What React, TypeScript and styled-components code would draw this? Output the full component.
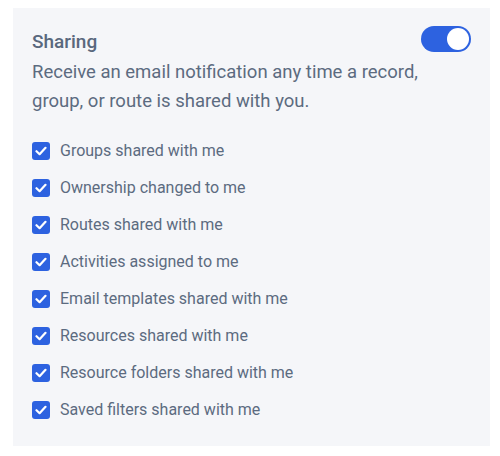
import React, { useState } from 'react'
import styled, { createGlobalStyle } from 'styled-components'

const GlobalStyle = createGlobalStyle`
  body {
    margin: 0;
    background: #ffffff;
    font-family: Roboto, "Liberation Sans", sans-serif;
  }
`

const Panel = styled.section`
  margin: 8px 10px 0 13px;
  width: 477px;
  box-sizing: border-box;
  background: #f5f6f9;
  padding: 23px 19px 27px 19px;
  color: #5c6b80;
`

const Header = styled.div`
  display: flex;
  justify-content: space-between;
  align-items: flex-start;
`

const Title = styled.h3`
  margin: 0;
  font-size: 19px;
  font-weight: 500;
  line-height: 22px;
  color: #59687d;
`

const Description = styled.p`
  margin: 5px 0 0;
  font-size: 18.5px;
  line-height: 29px;
  max-width: 430px;
`

const Toggle = styled.button<{ on: boolean }>`
  width: 50px;
  height: 26px;
  border: none;
  border-radius: 13px;
  padding: 2px;
  margin: -5px 0 0;
  display: flex;
  justify-content: ${p => (p.on ? 'flex-end' : 'flex-start')};
  background: ${p => (p.on ? '#2d62e0' : '#c5ccd6')};
  cursor: pointer;
`

const Knob = styled.span`
  width: 22px;
  height: 22px;
  border-radius: 50%;
  background: #ffffff;
`

const List = styled.ul`
  list-style: none;
  margin: 26px 0 0;
  padding: 0;
  display: flex;
  flex-direction: column;
  gap: 19px;
`

const Item = styled.li`
  display: flex;
  align-items: center;
  gap: 10px;
  font-size: 16px;
  line-height: 18px;
  cursor: pointer;
`

const Box = styled.span<{ checked: boolean }>`
  width: 18px;
  height: 18px;
  border-radius: 3px;
  box-sizing: border-box;
  display: flex;
  align-items: center;
  justify-content: center;
  background: ${p => (p.checked ? '#2d62e0' : '#ffffff')};
  border: ${p => (p.checked ? 'none' : '1px solid #b7c0cc')};
  flex-shrink: 0;
`

const labels = [
  'Groups shared with me',
  'Ownership changed to me',
  'Routes shared with me',
  'Activities assigned to me',
  'Email templates shared with me',
  'Resources shared with me',
  'Resource folders shared with me',
  'Saved filters shared with me',
]

export default function App() {
  const [on, setOn] = useState(true)
  const [checked, setChecked] = useState<boolean[]>(labels.map(() => true))

  const flip = (i: number) =>
    setChecked(c => c.map((v, j) => (j === i ? !v : v)))

  return (
    <>
      <GlobalStyle />
      <Panel>
        <Header>
          <Title>Sharing</Title>
          <Toggle on={on} onClick={() => setOn(!on)} aria-label="Sharing notifications">
            <Knob />
          </Toggle>
        </Header>
        <Description>
          Receive an email notification any time a record, group, or route is shared with you.
        </Description>
        <List>
          {labels.map((label, i) => (
            <Item key={label} onClick={() => flip(i)}>
              <Box checked={checked[i]}>
                {checked[i] && (
                  <svg width="12" height="10" viewBox="0 0 12 10">
                    <path d="M1.5 5.2 L4.6 8.2 L10.5 1.8" fill="none" stroke="#fff" strokeWidth="2.2" strokeLinecap="round" strokeLinejoin="round" />
                  </svg>
                )}
              </Box>
              {label}
            </Item>
          ))}
        </List>
      </Panel>
    </>
  )
}
